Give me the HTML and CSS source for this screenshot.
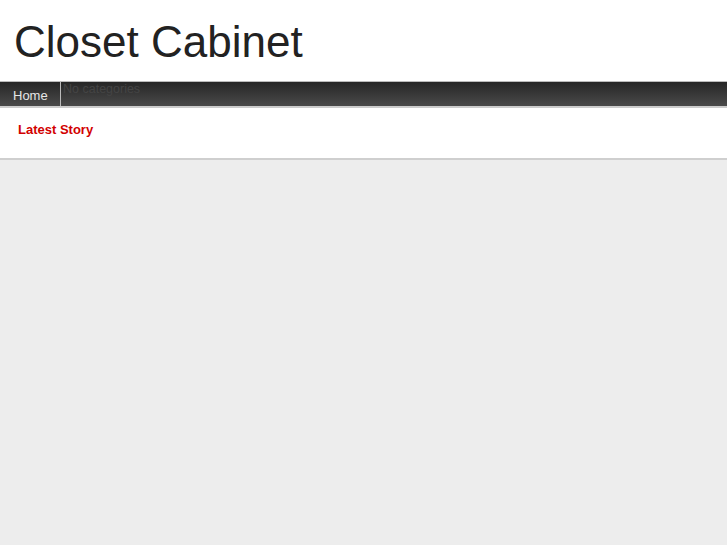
FILE: index.html
```html
<!DOCTYPE html>
<html>
<head>
<meta charset="utf-8">
<link rel="stylesheet" href="styles.css">
</head>
<body>
<div class="header"><h1 class="title">Closet Cabinet</h1></div>
<div class="nav">
  <a class="nav-home">Home</a>
  <div class="nav-cats">No categories</div>
</div>
<div class="latest">
  <span class="latest-label">Latest Story</span>
</div>
</body>
</html>
```
FILE: styles.css
```css
html, body { margin: 0; padding: 0; background: #ededed; font-family: "Liberation Sans", Arial, sans-serif; }
.header { background: #fff; height: 81px; display: flex; align-items: center; }
.title { margin: 0 0 0 14px; font-weight: normal; font-size: 44px; color: #222; line-height: 1; position: relative; top: 1px; }
.nav { display: flex; height: 24px; background: linear-gradient(#262626, #4a4a4a); border-top: 1px solid #bbb; border-bottom: 2px solid #ccc; }
.nav-home { color: #e6e6e6; font-size: 13px; padding: 6px 13px 0 13px; border-right: 1px solid #bbb; width: 34px; }
.nav-cats { color: #444; font-size: 12.5px; padding: 0 0 0 2px; line-height: 14px; }
.latest { background: #fff; height: 50px; border-bottom: 2px solid #cfcfcf; display: flex; align-items: center; padding-left: 18px; }
.latest-label { color: #d20000; font-weight: bold; font-size: 13px; position: relative; top: -4px; }
```
